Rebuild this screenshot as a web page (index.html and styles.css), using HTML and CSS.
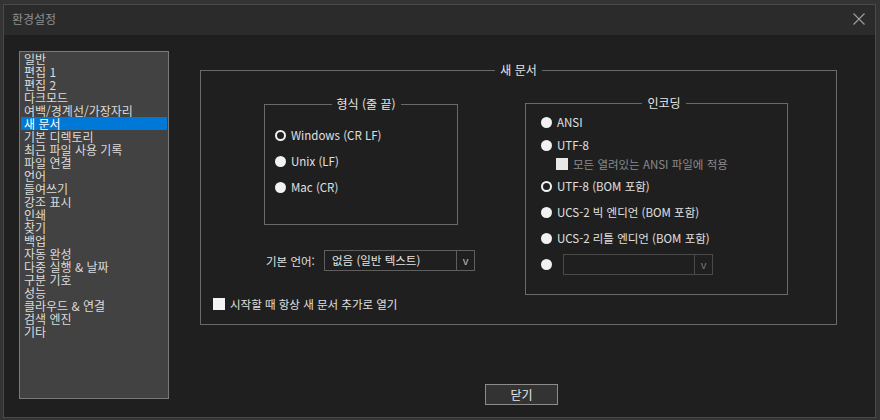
FILE: index.html
```html
<!DOCTYPE html>
<html lang="ko">

<head>
	<meta charset="UTF-8">
	<meta name="viewport" content="width=device-width, initial-scale=1.0">
	<title>환경설정</title>
	<link rel="stylesheet" href="styles.css">
</head>

<body>
	<div class="window">
		<div class="titlebar">
			<span class="title">환경설정</span>
			<svg class="close-x" width="12" height="12" viewBox="0 0 12 12">
				<path d="M0.5 0.5L11.5 11.5M11.5 0.5L0.5 11.5" stroke="#a0a0a0" stroke-width="1.1" fill="none" />
			</svg>
		</div>

		<div class="content">
			<ul class="nav-list">
				<li>일반</li>
				<li>편집 1</li>
				<li>편집 2</li>
				<li>다크모드</li>
				<li>여백/경계선/가장자리</li>
				<li class="selected">새 문서</li>
				<li>기본 디렉토리</li>
				<li>최근 파일 사용 기록</li>
				<li>파일 연결</li>
				<li>언어</li>
				<li>들여쓰기</li>
				<li>강조 표시</li>
				<li>인쇄</li>
				<li>찾기</li>
				<li>백업</li>
				<li>자동 완성</li>
				<li>다중 실행 &amp; 날짜</li>
				<li>구분 기호</li>
				<li>성능</li>
				<li>클라우드 &amp; 연결</li>
				<li>검색 엔진</li>
				<li>기타</li>
			</ul>

			<div class="main">
				<fieldset class="group group-doc">
					<legend>새 문서</legend>
					<div class="doc-cols">
						<div class="col-left">
							<fieldset class="group group-eol">
								<legend>형식 (줄 끝)</legend>
								<div class="radio-row"><span class="radio checked"></span>Windows (CR LF)</div>
								<div class="radio-row"><span class="radio"></span>Unix (LF)</div>
								<div class="radio-row"><span class="radio"></span>Mac (CR)</div>
							</fieldset>

							<div class="lang-row">
								<span class="lang-label">기본 언어:</span>
								<div class="select">
									<span class="select-text">없음 (일반 텍스트)</span>
									<span class="select-arrow">v</span>
								</div>
							</div>

							<div class="check-row start-check"><span class="checkbox"></span>시작할 때 항상 새 문서 추가로 열기</div>
						</div>

						<fieldset class="group group-enc">
							<legend>인코딩</legend>
							<div class="radio-row r-ansi"><span class="radio"></span>ANSI</div>
							<div class="radio-row r-utf8"><span class="radio"></span>UTF-8</div>
							<div class="check-row sub-check disabled"><span class="checkbox"></span>모든 열려있는 ANSI 파일에 적용</div>
							<div class="radio-row r-bom"><span class="radio checked"></span>UTF-8 (BOM 포함)</div>
							<div class="radio-row r-gap"><span class="radio"></span>UCS-2 빅 엔디언 (BOM 포함)</div>
							<div class="radio-row r-gap"><span class="radio"></span>UCS-2 리틀 엔디언 (BOM 포함)</div>
							<div class="radio-row r-other">
								<span class="radio"></span>
								<div class="select select-off">
									<span class="select-text"></span>
									<span class="select-arrow">v</span>
								</div>
							</div>
						</fieldset>
					</div>
				</fieldset>

				<button class="btn-close">닫기</button>
			</div>
		</div>
	</div>
</body>

</html>
```

FILE: styles.css
```css
* {
	box-sizing: border-box;
}

body {
	margin: 0;
	background-color: #343434;
	font-family: "Noto Sans CJK KR", "Noto Sans", sans-serif;
	font-size: 12px;
	color: #e0e0e0;
}

.window {
	width: 873px;
	height: 414px;
	margin: 4px 0 0 3px;
	border: 1px solid #4a4a4a;
	background-color: #1f1f1f;
	display: flex;
	flex-direction: column;
}

.titlebar {
	height: 30px;
	background-color: #2b2b2b;
	display: flex;
	align-items: center;
	justify-content: space-between;
	padding: 0 10px 0 8px;
}

.title {
	color: #8e8e8e;
	font-size: 12px;
	line-height: 16px;
	margin-top: -3px;
}

.close-x {
	margin-top: -2px;
}

.content {
	display: flex;
	align-items: flex-start;
	padding: 16px 0 0 15px;
}

/* left category list */
.nav-list {
	list-style: none;
	margin: 0;
	padding: 0 1px;
	width: 150px;
	height: 348px;
	border: 1px solid #7a7a7a;
	background-color: #424242;
}

.nav-list li {
	height: 13px;
	line-height: 13px;
	padding-left: 3px;
	color: #dcdcdc;
	white-space: nowrap;
}

.nav-list li.selected {
	background-color: #0078d7;
	color: #ffffff;
}

.main {
	margin: 11px 0 0 31px;
	display: flex;
	flex-direction: column;
}

/* group boxes */
.group {
	margin: 0;
	padding: 0;
	min-width: 0;
	border: 1px solid #6a6a6a;
}

.group legend {
	margin: 0 auto;
	padding: 0 5px;
	line-height: 16px;
	font-size: 12px;
	color: #e6e6e6;
}

.group-doc {
	width: 637px;
}

.doc-cols {
	display: flex;
	align-items: flex-start;
	font-size: 11.5px;
}

.col-left {
	width: 324px;
	padding: 0 0 12px 12px;
}

.group-eol {
	width: 194px;
	margin: 18px 0 0 51px;
	padding: 15px 0 29px 10px;
}

.group-eol .radio-row + .radio-row {
	margin-top: 10px;
}

.group-enc {
	width: 263px;
	margin-top: 17px;
	padding: 3px 0 19px 15px;
}

.radio-row {
	display: flex;
	align-items: center;
	height: 16px;
	line-height: 16px;
	white-space: nowrap;
}

.radio {
	width: 11px;
	height: 11px;
	border-radius: 50%;
	background-color: #f2f2f2;
	margin-right: 5px;
	flex-shrink: 0;
}

.radio.checked {
	background-color: #1f1f1f;
	border: 2.5px solid #f2f2f2;
}

.r-utf8 {
	margin-top: 7px;
}

.r-bom {
	margin-top: 6px;
}

.r-gap {
	margin-top: 10px;
}

.r-other {
	margin-top: 8px;
	height: 21px;
}

.r-other .select {
	margin-left: 6px;
}

/* dropdowns */
.lang-row {
	display: flex;
	align-items: center;
	margin-top: 25px;
	height: 21px;
}

.lang-label {
	margin-left: 53px;
	width: 58px;
	line-height: 16px;
	color: #e0e0e0;
}

.select {
	display: flex;
	width: 151px;
	height: 21px;
	border: 1px solid #5e5e5e;
}

.select-text {
	flex: 1;
	padding-left: 7px;
	line-height: 19px;
	color: #e6e6e6;
}

.select-arrow {
	width: 18px;
	border-left: 1px solid #5e5e5e;
	text-align: center;
	line-height: 18px;
	color: #c0c0c0;
	font-size: 11px;
}

.select-off {
	width: 150px;
	border-color: #4a4a4a;
}

.select-off .select-arrow {
	border-left-color: #4a4a4a;
	color: #7a7a7a;
}

/* checkboxes */
.check-row {
	display: flex;
	align-items: center;
	height: 16px;
	line-height: 16px;
	white-space: nowrap;
}

.start-check {
	margin-top: 25px;
}

.sub-check {
	margin: 3px 0 0 15px;
}

.checkbox {
	width: 12px;
	height: 12px;
	background-color: #f4f4f4;
	margin-right: 5px;
	flex-shrink: 0;
}

.check-row.disabled {
	color: #8a8a8a;
}

.check-row.disabled .checkbox {
	background-color: #e8e8e8;
}

.btn-close {
	margin: 59px 0 0 285px;
	width: 73px;
	height: 21px;
	padding: 0;
	border: 1px solid #8c8c8c;
	background-color: #333333;
	color: #e8e8e8;
	font-family: inherit;
	font-size: 12px;
	line-height: 18px;
}
```
